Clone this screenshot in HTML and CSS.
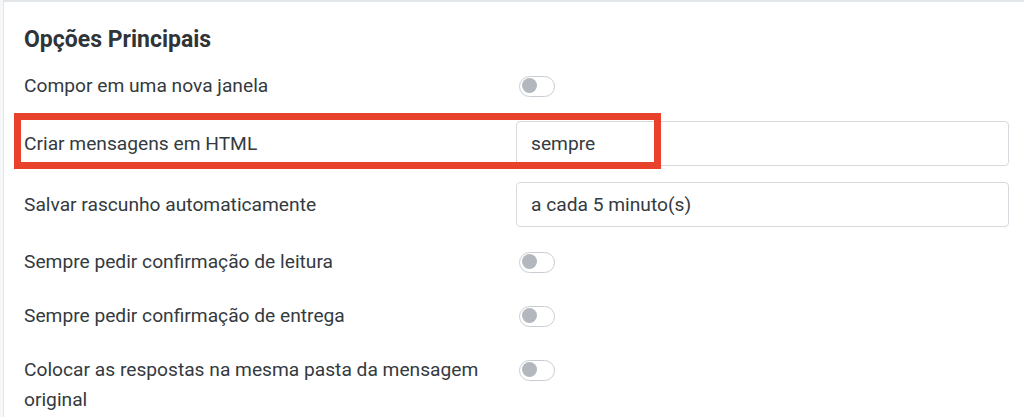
FILE: index.html
```html
<!DOCTYPE html>
<html lang="pt">
<head>
  <meta charset="UTF-8" />
  <meta name="viewport" content="width=device-width, initial-scale=1.0" />
  <title>Opções Principais</title>
  <link rel="stylesheet" href="styles.css">
</head>
<body>
  <div class="panel">
    <h2 class="panel-title">Opções Principais</h2>

    <div class="row row-first">
      <div class="label">Compor em uma nova janela</div>
      <div class="control"><span class="toggle"></span></div>
    </div>

    <div class="row row-field highlight">
      <div class="label">Criar mensagens em HTML</div>
      <div class="control"><div class="field">sempre</div></div>
    </div>

    <div class="row row-field">
      <div class="label">Salvar rascunho automaticamente</div>
      <div class="control"><div class="field">a cada 5 minuto(s)</div></div>
    </div>

    <div class="row">
      <div class="label">Sempre pedir confirmação de leitura</div>
      <div class="control"><span class="toggle"></span></div>
    </div>

    <div class="row">
      <div class="label">Sempre pedir confirmação de entrega</div>
      <div class="control"><span class="toggle"></span></div>
    </div>

    <div class="row row-top">
      <div class="label">Colocar as respostas na mesma pasta da mensagem original</div>
      <div class="control"><span class="toggle"></span></div>
    </div>
  </div>
</body>
</html>
```

FILE: styles.css
```css
body, html {
  margin: 0;
  padding: 0;
  height: 100vh;
  overflow: hidden;
  background: #f5f7f9;
  font-family: Roboto, "Liberation Sans", Arial, sans-serif;
  color: #343a40;
}
.panel {
  margin-left: 3px;
  height: 100%;
  box-sizing: border-box;
  overflow: hidden;
  background: #fff;
  border-top: 2px solid #e3e6e9;
  border-left: 1px solid #e3e6e9;
  padding: 23px 15px 0 20px;
}
.panel-title {
  margin: 0 0 5px;
  font-size: 23px;
  line-height: 30px;
  font-weight: 700;
  color: #2f3438;
}
.row {
  display: flex;
  align-items: center;
  padding: 12px 0;
}
.row-first {
  padding-top: 11px;
}
.row-field {
  padding: 8px 0;
}
.row-top {
  align-items: flex-start;
}
.label {
  flex: 0 0 492px;
  padding-right: 18px;
  box-sizing: border-box;
  font-size: 19.2px;
  line-height: 30px;
}
.control {
  flex: 1;
  display: flex;
  align-items: center;
  min-height: 30px;
}
.toggle {
  position: relative;
  display: inline-block;
  width: 36px;
  height: 21px;
  margin-left: 3px;
  box-sizing: border-box;
  border: 1.5px solid #c9cdd2;
  border-radius: 11px;
  background: #fff;
}
.toggle::before {
  content: "";
  position: absolute;
  top: 1.5px;
  left: 2px;
  width: 15px;
  height: 15px;
  border-radius: 50%;
  background: #b3b8be;
}
.field {
  width: 100%;
  height: 45px;
  box-sizing: border-box;
  border: 1px solid #d6dade;
  border-radius: 4px;
  padding: 0 14px;
  font-size: 19.2px;
  line-height: 43px;
  color: #343a40;
}
.highlight {
  position: relative;
}
.highlight::after {
  content: "";
  position: absolute;
  top: 0;
  left: -10px;
  width: 647px;
  height: 56px;
  box-sizing: border-box;
  border: 7px solid #e8412c;
}
```
